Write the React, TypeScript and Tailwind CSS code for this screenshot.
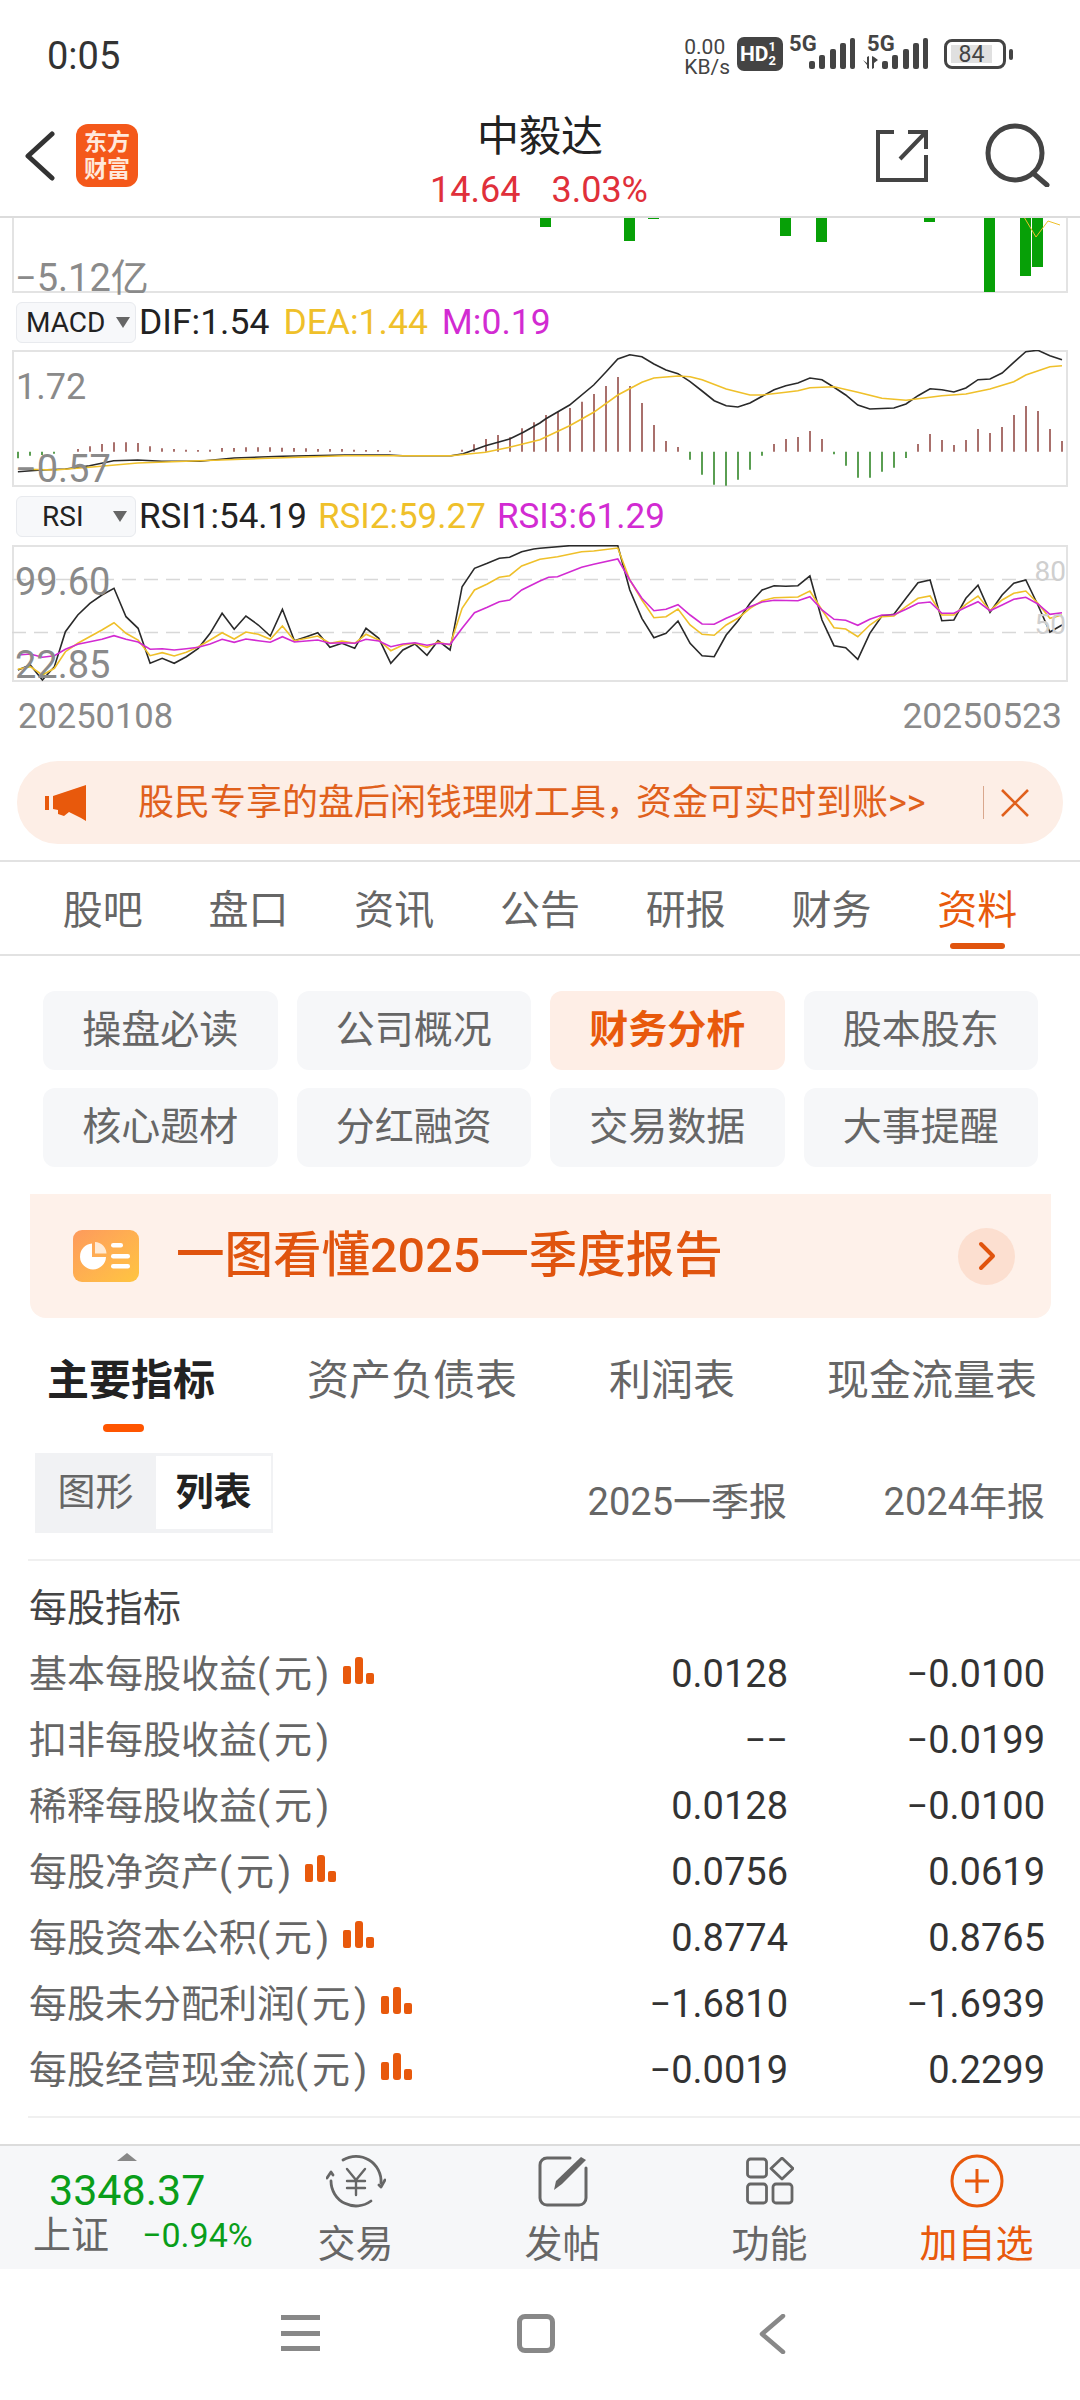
const font = "font-['Roboto','Noto_Sans_CJK_SC',sans-serif]";

// chart traces are in zoomed coords: left half and right half of the page, see toPts
function toPts(left: string, right: string) {
  const conv = (s: string, off: number) =>
    s
      .split(" ")
      .map((p) => {
        const [u, z] = p.split(",").map(Number);
        return `${((u + off) / 2.904).toFixed(1)},${(290 + z / 3).toFixed(1)}`;
      })
      .join(" ");
  return conv(left, 0) + " " + conv(right, 1568);
}

const difLine = toPts(
  "52,548 120,543 190,540 260,530 330,515 400,513 470,517 580,517 680,507 820,502 1000,498 1130,498 1170,500 1310,500 1345,494 1410,470 1480,450 1520,430",
  "0,402 16,390 86,348 156,288 191,250 226,210 261,197 296,203 331,225 366,243 401,254 436,278 471,306 506,335 541,350 575,354 610,342 680,302 714,290 749,282 784,267 819,272 854,295 888,318 923,348 958,360 1028,357 1063,345 1098,320 1133,299 1167,302 1202,309 1237,297 1272,272 1307,270 1342,252 1376,220 1411,188 1446,184 1481,200 1516,212"
);
const deaLine = toPts(
  "52,540 160,543 260,535 400,522 580,515 800,507 1000,500 1310,500 1410,490 1480,475",
  "0,452 86,410 156,370 226,318 296,280 331,267 401,261 436,263 471,272 541,300 610,318 645,318 714,310 749,305 784,296 854,293 923,310 993,328 1063,334 1133,325 1167,320 1237,315 1307,300 1376,278 1411,258 1481,233 1516,230"
);
const macdBars = [
  -20, -12, -10, -6, 0, 8, 16, 23, 28, 28, 26, 16, 10, 8, 6, 5, 6, 11, 11, 13, 13, 13, 12, 11, 10, 8, 8, 8, 6, 5, 5, 3, 0, 0, 0, 0, 0, 6,
  22, 38, 50, 43, 70, 88, 110, 120, 131, 150, 173, 197, 224, 197, 146, 80, 32, 14, -24, -69, -99, -102, -84, -54, -12, 23, 38, 44, 62, 38,
  -8, -42, -78, -78, -60, -48, -19, 23, 53, 35, 20, 35, 68, 56, 74, 110, 137, 122, 68, 32,
];

const rsiBlack = toPts(
  "52,1140 88,1125 123,1170 158,1130 190,1025 226,975 261,940 296,915 331,895 366,980 401,1015 436,1120 471,1105 506,1120 541,1100 576,1075 610,1030 645,970 680,1018 714,978 750,1005 785,1038 820,958 855,1052 890,1040 923,1028 958,1072 993,1060 1030,1075 1063,1015 1100,1045 1135,1120 1170,1080 1205,1062 1240,1096 1272,1052 1307,1080 1342,890 1378,835 1415,820 1450,805 1480,802 1515,785 1550,777",
  "0,775 86,767 226,767 261,900 296,985 331,1043 366,1030 401,993 436,1060 471,1097 506,1100 541,1035 575,993 610,940 645,900 680,887 714,889 749,887 784,858 819,990 854,1067 888,1073 923,1108 958,1030 993,978 1028,973 1063,925 1098,878 1133,870 1167,992 1202,990 1237,925 1272,886 1307,967 1342,915 1376,880 1411,870 1446,945 1481,1026 1516,1005"
);
const rsiYellow = toPts(
  "52,1138 88,1130 123,1155 158,1135 190,1085 226,1060 296,1020 331,998 366,1030 401,1050 436,1097 471,1088 506,1098 541,1087 576,1070 610,1050 645,1028 680,1047 714,1026 750,1033 785,1048 820,1008 855,1052 923,1038 958,1060 993,1053 1030,1060 1063,1033 1100,1050 1135,1082 1170,1065 1205,1060 1240,1072 1272,1056 1307,1065 1342,955 1378,900 1415,882 1450,862 1480,857 1515,828",
  "0,808 51,800 121,785 156,783 226,774 261,870 296,930 331,983 366,980 401,957 436,1005 471,1033 506,1036 541,1005 575,985 610,955 645,932 680,923 749,921 784,903 819,960 854,1013 888,1017 923,1040 958,1005 993,980 1028,978 1063,950 1098,925 1133,918 1167,975 1202,975 1237,943 1272,918 1307,962 1342,930 1376,910 1411,903 1446,940 1481,985 1516,975"
);
const rsiPurple = toPts(
  "52,1095 88,1092 123,1102 158,1097 190,1078 226,1063 296,1048 331,1037 366,1048 401,1056 436,1078 471,1076 506,1080 541,1076 576,1072 610,1062 645,1048 680,1057 714,1047 750,1052 785,1057 820,1040 855,1056 923,1050 958,1060 993,1058 1030,1060 1063,1048 1100,1053 1135,1070 1170,1062 1205,1058 1240,1066 1272,1060 1307,1063 1342,1015 1378,968 1415,952 1450,935 1480,930 1515,900",
  "0,873 25,862 51,860 121,832 156,823 226,807 261,870 296,925 331,962 366,958 401,944 436,975 471,1002 506,1003 541,985 575,970 610,950 645,936 680,931 749,932 784,920 819,960 854,988 888,991 923,1006 958,988 993,975 1028,974 1063,958 1098,940 1133,936 1167,970 1202,970 1237,952 1272,935 1307,962 1342,945 1376,928 1411,922 1446,942 1481,973 1516,968"
);

const volumeBars = [
  [540, 228, 1], [624, 242, 1], [648, 220, 1], [780, 237, 1], [816, 243, 1], [852, 219, 0.3], [924, 223, 1], [984, 293, 1], [1020, 277, 1], [1032, 268, 1],
];

const tabs = ["股吧", "盘口", "资讯", "公告", "研报", "财务", "资料"];
const tiles = ["操盘必读", "公司概况", "财务分析", "股本股东", "核心题材", "分红融资", "交易数据", "大事提醒"];
const rows: [string, string, string, boolean][] = [
  ["基本每股收益", "0.0128", "−0.0100", true],
  ["扣非每股收益", "−−", "−0.0199", false],
  ["稀释每股收益", "0.0128", "−0.0100", false],
  ["每股净资产", "0.0756", "0.0619", true],
  ["每股资本公积", "0.8774", "0.8765", true],
  ["每股未分配利润", "−1.6810", "−1.6939", true],
  ["每股经营现金流", "−0.0019", "0.2299", true],
];

function Signal({ arrows }: { arrows?: boolean }) {
  return (
    <svg width="66" height="34" viewBox="0 0 66 34" fill="#444" className="block">
      {arrows && <path d="M1 23l4 3v-6l2-1v13l-2-1v-3zM10 19l2 1 4 3-4 3v5l-2 1z" />}
      <rect x="20" y="24" width="6" height="8" rx="2" />
      <rect x="30" y="18" width="6" height="14" rx="2" />
      <rect x="41" y="12" width="6" height="20" rx="2" />
      <rect x="51" y="6" width="6" height="26" rx="2" />
      <rect x="61" y="1" width="5" height="31" rx="2" />
    </svg>
  );
}

function StatusBar() {
  return (
    <div className="flex h-[110px] items-start pt-[37px] text-[#444]">
      <div className="ml-[47px] mt-[1px] text-[38px] leading-[36px] text-[#333]">0:05</div>
      <div className="ml-[564px] flex flex-col text-[21px] leading-[20px]">
        <span>0.00</span>
        <span>KB/s</span>
      </div>
      <div className="ml-[7px] flex h-[34px] w-[46px] items-center rounded-[7px] bg-[#444] pl-[3px] font-bold text-white">
        <span className="text-[21px] leading-none">HD</span>
        <span className="flex flex-col text-[13px] leading-[14px]">
          <span>1</span>
          <span>2</span>
        </span>
      </div>
      <div className="relative ml-[6px] h-[34px] w-[66px]">
        <span className="absolute left-0 top-[-3px] text-[22px] font-bold leading-[20px]">5G</span>
        <Signal />
      </div>
      <div className="relative ml-[7px] h-[34px] w-[67px]">
        <span className="absolute left-[5px] top-[-3px] text-[22px] font-bold leading-[20px]">5G</span>
        <Signal arrows />
      </div>
      <div className="ml-[15px] mt-[2px] flex items-center">
        <div className="flex h-[30px] w-[62px] items-center rounded-[8px] border-[3px] border-[#444] pl-[4px]">
          <span className="flex h-[18px] w-[41px] items-center justify-center bg-[#e0e0e0] text-[23px] leading-none">84</span>
        </div>
        <span className="ml-[3px] h-[11px] w-[4px] rounded-[2px] bg-[#444]" />
      </div>
    </div>
  );
}

function NavHeader() {
  return (
    <div className="relative flex h-[108px] border-b-2 border-[#dcdcdc]">
      <svg width="30" height="50" viewBox="0 0 30 50" fill="none" stroke="#333" strokeWidth="5" strokeLinecap="round" strokeLinejoin="round" className="ml-[25px] mt-[21px]">
        <path d="M27 3L3 25L27 47" />
      </svg>
      <div className="ml-[21px] mt-[14px] flex h-[63px] w-[62px] flex-col items-center justify-center rounded-[12px] bg-[#f4581a] text-[23px] font-bold leading-[27px] text-[#ffe9dc]">
        <span>东方</span>
        <span>财富</span>
      </div>
      <div className="absolute left-[340px] top-0 flex w-[400px] flex-col items-center">
        <span className="mt-[4px] text-[42px] leading-[46px] text-[#222]">中毅达</span>
        <span className="mt-[12px] -ml-[2px] flex gap-[31px] text-[36px] leading-[36px] text-[#e0303a]">
          <span>14.64</span>
          <span>3.03%</span>
        </span>
      </div>
      <svg width="54" height="54" viewBox="0 0 54 54" fill="none" stroke="#444" strokeWidth="4" className="ml-[737px] mt-[19px]">
        <path d="M19 3H3V51H51V26" />
        <path d="M25 30L50 4M33 3H51V20" />
      </svg>
      <svg width="66" height="64" viewBox="0 0 66 64" fill="none" stroke="#444" strokeWidth="5" strokeLinecap="round" className="ml-[56px] mt-[13px]">
        <circle cx="30" cy="30" r="27" />
        <path d="M48 50L62 62" />
      </svg>
    </div>
  );
}

function ChartLegend({ name, items, macd }: { name: string; items: [string, string][]; macd: boolean }) {
  return (
    <div className="flex h-[41px] items-center">
      <div className={"ml-[16px] flex h-[41px] w-[120px] items-center rounded-[6px] border border-[#e8eaee] bg-[#f7f8fa] text-[#222] " + (macd ? "pl-[9px]" : "pl-[25px]")}>
        <span className="text-[28px]">{name}</span>
        <span className={"h-0 w-0 border-x-[7px] border-t-[11px] border-x-transparent border-t-[#666] " + (macd ? "ml-[11px]" : "ml-[29px]")} />
      </div>
      <div className={"ml-[3px] flex leading-none " + (macd ? "gap-[14px] text-[35.5px]" : "gap-[11px] text-[35px]")}>
        {items.map(([t, c]) => (
          <span key={t} style={{ color: c }}>
            {t}
          </span>
        ))}
      </div>
    </div>
  );
}

function MacdChart() {
  return (
    <div className="relative ml-[12px] mt-[7px] h-[137px] w-[1056px] border-2 border-[#e3e3e3]">
      <svg className="absolute left-[-2px] top-[-2px]" width="1056" height="137" viewBox="12 351 1056 137" fill="none">
        {macdBars.map((h, i) => {
          const x = 18 + i * 12;
          const y0 = 290 + 488 / 3;
          return <line key={i} x1={x} x2={x} y1={y0} y2={y0 - h / 3} stroke={h > 0 ? "#a9706c" : "#5a9e52"} strokeWidth="2" />;
        })}
        <polyline points={difLine} stroke="#2a2a2a" strokeWidth="1.6" />
        <polyline points={deaLine} stroke="#efc02a" strokeWidth="1.6" />
      </svg>
      <span className="absolute left-[2px] top-[15px] text-[36px] leading-[40px] text-[#8a8a8a]">1.72</span>
      <span className="absolute left-[1px] top-[97px] text-[38px] leading-[40px] text-[#8a8a8a]">−0.57</span>
    </div>
  );
}

function RsiChart() {
  return (
    <div className="relative ml-[12px] mt-[8px] h-[137px] w-[1056px] border-2 border-[#e3e3e3]">
      <svg className="absolute left-[-2px] top-[-2px]" width="1056" height="137" viewBox="12 545 1056 137" fill="none">
        <line x1="12" x2="1066" y1="579.5" y2="579.5" stroke="#d8d8d8" strokeWidth="1.5" strokeDasharray="14 8" />
        <line x1="12" x2="1066" y1="632.5" y2="632.5" stroke="#d8d8d8" strokeWidth="1.5" strokeDasharray="14 8" />
        <polyline points={rsiBlack} stroke="#2a2a2a" strokeWidth="1.6" />
        <polyline points={rsiYellow} stroke="#efc02a" strokeWidth="1.6" />
        <polyline points={rsiPurple} stroke="#d22bd2" strokeWidth="1.6" />
      </svg>
      <span className="absolute left-[1px] top-[15px] text-[38px] leading-[40px] text-[#8a8a8a]">99.60</span>
      <span className="absolute left-[1px] top-[98px] text-[38px] leading-[40px] text-[#8a8a8a]">22.85</span>
      <span className="absolute right-[0px] top-[10px] text-[28px] leading-[30px] text-[#cfcfcf]">80</span>
      <span className="absolute right-[0px] top-[63px] text-[28px] leading-[30px] text-[#cfcfcf]">50</span>
    </div>
  );
}

function VolumeStub() {
  return (
    <div className="relative ml-[12px] h-[75px] w-[1056px] border-x-2 border-b-2 border-[#e3e3e3]">
      <svg className="absolute left-[-2px] top-0" width="1056" height="75" viewBox="12 219 1056 75" fill="none">
        {volumeBars.map(([x, y, o]) => (
          <rect key={x} x={x} y="218" width="11" height={y - 218} fill="#07a007" opacity={o} />
        ))}
        <polyline points="1024,218 1036,238 1048,222 1060,226" stroke="#efc02a" strokeWidth="1" />
      </svg>
      <span className="absolute left-[1px] top-[40px] text-[38px] leading-[40px] text-[#8a8a8a]">−5.12亿</span>
    </div>
  );
}

function Banner() {
  return (
    <div className="ml-[17px] mt-[29px] flex h-[83px] w-[1046px] items-center rounded-[41px] bg-[#fdeee6]">
      <svg width="41" height="36" viewBox="0 0 41 36" fill="#e8590c" className="ml-[28px]">
        <path d="M0 11h4v14H0zM8 11L41 0v36l-5-3-12-6-5 4-6-2v-4l-5-1z" />
      </svg>
      <span className="ml-[52px] w-[845px] whitespace-nowrap text-[36px] leading-none text-[#e0601c]">
        股民专享的盘后闲钱理财工具<span className="tracking-[-6px]">，</span>资金可实时到账&gt;&gt;
      </span>
      <span className="h-[33px] w-px bg-[#d9a78d]" />
      <svg width="30" height="30" viewBox="0 0 30 30" fill="none" stroke="#e0601c" strokeWidth="2.6" className="ml-[16px]">
        <path d="M2 2L28 28M28 2L2 28" />
      </svg>
    </div>
  );
}

function StockTabs() {
  return (
    <div className="mt-[16px] flex h-[96px] border-y-2 border-[#e2e2e2] px-[30px]">
      {tabs.map((t, i) => (
        <div key={t} className={"relative flex flex-1 justify-center pt-[26px] text-[40px] leading-[46px] " + (i === 6 ? "text-[#e8590c]" : "text-[#666]")}>
          {t}
          {i === 6 && <span className="absolute bottom-[5px] h-[6px] w-[55px] rounded-[3px] bg-[#e0540e]" />}
        </div>
      ))}
    </div>
  );
}

function TileGrid() {
  return (
    <div className="ml-[43px] mt-[35px] grid w-[995px] grid-cols-4 gap-x-[19px] gap-y-[18px]">
      {tiles.map((t) => {
        const on = t === "财务分析";
        return (
          <div key={t} className={"flex h-[79px] items-center justify-center rounded-[12px] text-[39px] " + (on ? "bg-[#feeee6] font-bold text-[#e8590c]" : "bg-[#f6f7f9] text-[#666]")}>
            {t}
          </div>
        );
      })}
    </div>
  );
}

function ReportCard() {
  return (
    <div className="ml-[30px] mt-[27px] flex h-[124px] w-[1021px] items-center rounded-b-[16px] bg-[#fef1ea]">
      <div className="ml-[43px] h-[52px] w-[66px] rounded-[9px] bg-gradient-to-br from-[#fd9a5c] to-[#ffc53f]">
        <svg width="66" height="52" viewBox="0 0 66 52" fill="#fff">
          <path d="M19 13.5a13 13 0 1 0 14 13.500H19z" />
          <path d="M22 12a12 12 0 0 1 11.500 11.500H22z" opacity="0.75" />
          <rect x="38" y="13" width="12" height="4.500" rx="2.200" />
          <rect x="38" y="24" width="19" height="4.500" rx="2.200" />
          <rect x="38" y="34" width="19" height="4.500" rx="2.200" />
        </svg>
      </div>
      <span className="ml-[37px] w-[782px] text-[48.5px] font-medium leading-none text-[#e0540e]">一图看懂2025一季度报告</span>
      <span className="flex h-[57px] w-[57px] items-center justify-center rounded-full bg-[#fcdfd0]">
        <svg width="18" height="30" viewBox="0 0 18 30" fill="none" stroke="#e0540e" strokeWidth="4" strokeLinecap="round" strokeLinejoin="round">
          <path d="M3 3L15 15L3 27" />
        </svg>
      </span>
    </div>
  );
}

function FinanceTabs() {
  return (
    <div className="relative ml-[47px] mt-[40px] flex h-[46px] gap-[92px] text-[42px] leading-[46px] text-[#666]">
      <span className="font-bold text-[#222]">主要指标</span>
      <span>资产负债表</span>
      <span>利润表</span>
      <span>现金流量表</span>
      <span className="absolute left-[56px] top-[66px] h-[8px] w-[41px] rounded-[4px] bg-[#ff5500]" />
    </div>
  );
}

function TableHead() {
  return (
    <div className="ml-[35px] mt-[49px] flex h-[80px] items-center text-[38px]">
      <div className="flex h-[80px] w-[238px] bg-[#f1f2f4] pt-[3px]">
        <span className="flex h-[73px] w-[121px] items-center justify-center text-[38px] text-[#666]">图形</span>
        <span className="flex h-[73px] w-[115px] items-center justify-center bg-white text-[38px] font-bold text-[#222]">列表</span>
      </div>
      <span className="mt-[18px] w-[514px] text-right text-[#666]">2025一季报</span>
      <span className="mt-[18px] w-[258px] text-right text-[#666]">2024年报</span>
    </div>
  );
}

function ChartMark() {
  return (
    <svg width="31" height="27" viewBox="0 0 31 27" fill="#e8590c" className="mb-[8px] ml-[10px]">
      <rect x="0" y="9" width="8" height="18" rx="2" />
      <rect x="12" y="0" width="8" height="27" rx="3" />
      <rect x="23" y="16" width="8" height="11" rx="2" />
    </svg>
  );
}

function FinanceRows() {
  return (
    <div className="ml-[28px] mt-[26px] border-y-2 border-[#f0f0f0] pb-[13px] pt-[14px]">
      <div className="flex h-[66px] items-center pl-[1px] text-[38px] text-[#444]">每股指标</div>
      {rows.map(([label, a, b, mark]) => (
        <div key={label} className="flex h-[66px] items-center pl-[1px] text-[38px]">
          <span className="flex flex-1 items-center whitespace-nowrap text-[#666]">
            {label}
            <span className="tracking-[4px]">(元)</span>
            {mark && <ChartMark />}
          </span>
          <span className="w-[250px] text-right text-[#333]">{a}</span>
          <span className="mr-[35px] w-[257px] text-right text-[#333]">{b}</span>
        </div>
      ))}
    </div>
  );
}

function BottomItem({ label, active, children }: { label: string; active?: boolean; children: React.ReactNode }) {
  return (
    <div className="flex w-[207px] flex-col items-center pt-[8px]">
      <div className="flex h-[54px] items-center justify-center">{children}</div>
      <span className={"mt-[14px] whitespace-nowrap text-[38px] leading-[44px] " + (active ? "text-[#e8590c]" : "text-[#666]")}>{label}</span>
    </div>
  );
}

function BottomBar() {
  return (
    <div className="mt-[26px] flex h-[125px] border-t-2 border-[#dcdcdc] bg-[#f6f7f9]">
      <div className="w-[252px]">
        <svg width="20" height="8" viewBox="0 0 20 8" fill="#888" className="ml-[117px] mt-[7px]">
          <path d="M10 0L20 8H0z" />
        </svg>
        <div className="ml-[49px] mt-[7px] text-[43px] leading-[44px] text-[#0a9e1a]">3348.37</div>
        <div className="ml-[33px] flex h-[46px] items-center whitespace-nowrap">
          <span className="text-[38px] text-[#666]">上证</span>
          <span className="ml-[33px] text-[34px] text-[#0a9e1a]">−0.94%</span>
        </div>
      </div>
      <BottomItem label="交易">
        <svg width="60" height="54" viewBox="0 0 60 54" fill="none" stroke="#666" strokeWidth="2.8" strokeLinecap="round" strokeLinejoin="round">
          <path d="M17 6A25 25 0 0 1 55 29" />
          <path d="M59 26l-4 7-2-2" />
          <path d="M45 47A25 25 0 0 1 5 27" />
          <path d="M1 24l4-6 2 3" />
          <path d="M21 15l9 11 9-11M30 26v15M21 27h18M21 34h18" strokeWidth="2.400" />
        </svg>
      </BottomItem>
      <BottomItem label="发帖">
        <svg width="52" height="52" viewBox="0 0 52 52" fill="none" stroke="#666" strokeWidth="3" strokeLinecap="round">
          <path d="M33 3H10a7 7 0 0 0-7 7v33a7 7 0 0 0 7 7h32a7 7 0 0 0 7-7V13" />
          <path d="M17 35l2-9L44 2l5 3-24 24z" fill="#666" stroke="none" />
        </svg>
      </BottomItem>
      <BottomItem label="功能">
        <svg width="48" height="48" viewBox="0 0 48 48" fill="none" stroke="#666" strokeWidth="2.800">
          <rect x="1.500" y="2" width="19" height="18" rx="3" />
          <path d="M36 1L47 11.500L36 22L25 11.500z" strokeLinejoin="round" />
          <rect x="1.500" y="27" width="19" height="19" rx="3" />
          <rect x="27" y="27" width="19" height="19" rx="3" />
        </svg>
      </BottomItem>
      <BottomItem label="加自选" active>
        <svg width="54" height="54" viewBox="0 0 54 54" fill="none" stroke="#e8590c" strokeWidth="3">
          <circle cx="27" cy="27" r="25" />
          <path d="M27 15V39M15 27H39" />
        </svg>
      </BottomItem>
    </div>
  );
}

function SystemNav() {
  return (
    <div className="flex flex-1 items-start pt-[45px]">
      <div className="ml-[281px] mt-[1px] flex h-[36px] w-[39px] flex-col justify-between">
        <span className="h-[5px] bg-[#888]" />
        <span className="h-[5px] bg-[#888]" />
        <span className="h-[5px] bg-[#888]" />
      </div>
      <div className="ml-[197px] h-[39px] w-[38px] rounded-[8px] border-[5px] border-[#888]" />
      <svg width="28" height="40" viewBox="0 0 28 40" fill="none" stroke="#888" strokeWidth="4.5" strokeLinecap="round" strokeLinejoin="round" className="ml-[203px]">
        <path d="M25 2L4 20L25 38" />
      </svg>
    </div>
  );
}

export default function App() {
  return (
    <div className={"flex h-[2400px] w-[1080px] flex-col overflow-hidden bg-white " + font}>
      <StatusBar />
      <NavHeader />
      <VolumeStub />
      <div className="mt-[9px]">
        <ChartLegend
          name="MACD"
          macd
          items={[
            ["DIF:1.54", "#222"],
            ["DEA:1.44", "#efc02a"],
            ["M:0.19", "#d22bd2"],
          ]}
        />
      </div>
      <MacdChart />
      <div className="mt-[9px]">
        <ChartLegend
          name="RSI"
          macd={false}
          items={[
            ["RSI1:54.19", "#222"],
            ["RSI2:59.27", "#efc02a"],
            ["RSI3:61.29", "#d22bd2"],
          ]}
        />
      </div>
      <RsiChart />
      <div className="mx-[18px] mt-[18px] flex justify-between leading-[32px] text-[#8a8a8a]">
        <span className="text-[34.5px]">20250108</span>
        <span className="text-[35.5px]">20250523</span>
      </div>
      <Banner />
      <StockTabs />
      <TileGrid />
      <ReportCard />
      <FinanceTabs />
      <TableHead />
      <FinanceRows />
      <BottomBar />
      <SystemNav />
    </div>
  );
}
